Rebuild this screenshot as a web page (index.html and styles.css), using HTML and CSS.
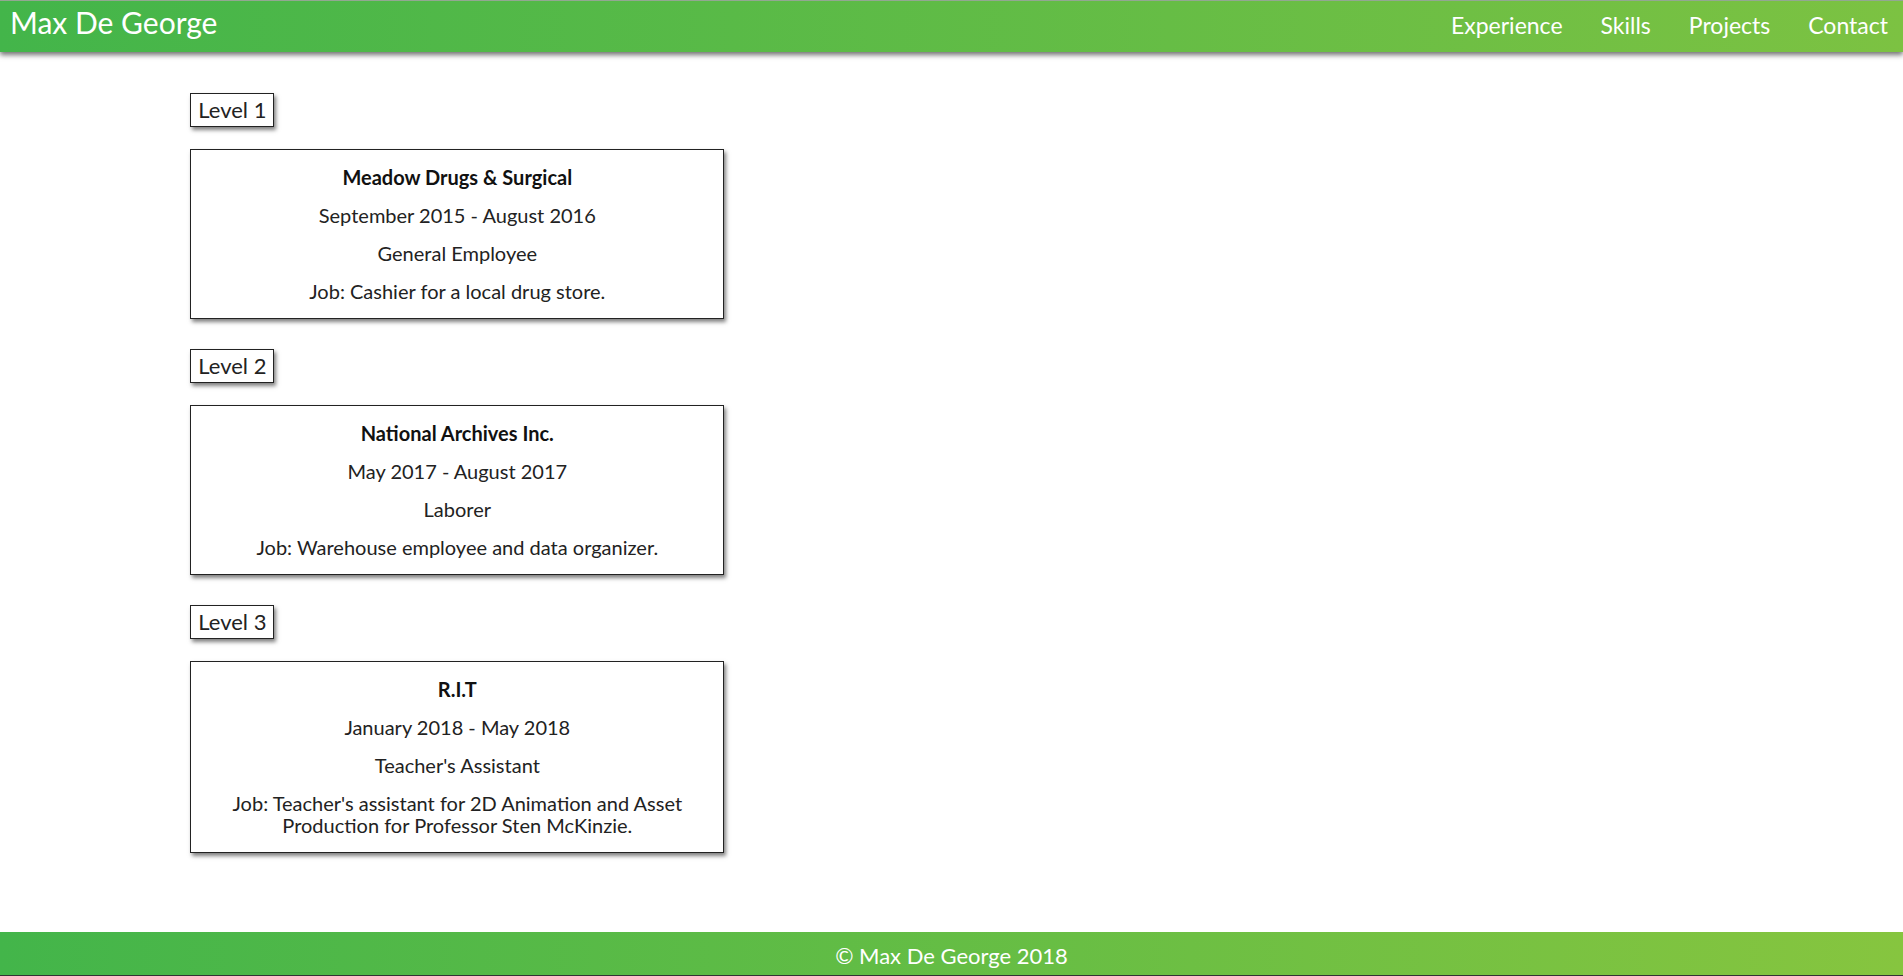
FILE: index.html
```html
<!DOCTYPE html>
<html lang="en">
<head>
<meta charset="utf-8">
<title>Max De George - Experience</title>
<link rel="stylesheet" href="styles.css">
</head>
<body>
<header class="topbar">
  <div class="brand">Max De George</div>
  <nav class="nav">
    <a class="nav-link" href="#">Experience</a>
    <a class="nav-link" href="#">Skills</a>
    <a class="nav-link" href="#">Projects</a>
    <a class="nav-link" href="#">Contact</a>
  </nav>
</header>
<main class="content">
  <section class="level">
    <h2 class="level-tag">Level 1</h2>
    <div class="job-card">
      <p class="job-company">Meadow Drugs &amp; Surgical</p>
      <p>September 2015 - August 2016</p>
      <p>General Employee</p>
      <p>Job: Cashier for a local drug store.</p>
    </div>
  </section>
  <section class="level">
    <h2 class="level-tag">Level 2</h2>
    <div class="job-card">
      <p class="job-company">National Archives Inc.</p>
      <p>May 2017 - August 2017</p>
      <p>Laborer</p>
      <p>Job: Warehouse employee and data organizer.</p>
    </div>
  </section>
  <section class="level">
    <h2 class="level-tag">Level 3</h2>
    <div class="job-card">
      <p class="job-company">R.I.T</p>
      <p>January 2018 - May 2018</p>
      <p>Teacher's Assistant</p>
      <p>Job: Teacher's assistant for 2D Animation and Asset Production for Professor Sten McKinzie.</p>
    </div>
  </section>
</main>
<footer class="footer">© Max De George 2018</footer>
</body>
</html>
```
FILE: styles.css
```css
html, body {
  margin: 0;
  padding: 0;
}
body {
  font-family: Lato, "Liberation Sans", sans-serif;
  color: #222;
  background: #fff;
  min-height: 976px;
  display: flex;
  flex-direction: column;
}
.topbar {
  height: 52px;
  box-sizing: border-box;
  border-top: 1px solid #93a792;
  background: linear-gradient(to right, #43b54a, #7cc242);
  box-shadow: 0 3px 5px rgba(0, 0, 0, 0.55);
  display: flex;
  justify-content: space-between;
  align-items: flex-start;
  color: #fff;
  position: relative;
  z-index: 1;
}
.brand {
  font-size: 30px;
  line-height: 40px;
  padding-left: 10px;
  margin-top: 1px;
}
.nav {
  display: flex;
  gap: 38px;
  padding-right: 15px;
  margin-top: 7px;
}
.nav-link {
  color: #fff;
  text-decoration: none;
  font-size: 23px;
  line-height: 34px;
}
.content {
  flex: 1;
  padding: 41px 0 0 10%;
}
.level {
  margin-bottom: 30px;
}
.level-tag {
  display: inline-block;
  vertical-align: top;
  margin: 0 0 22px;
  font-weight: normal;
  font-size: 22px;
  line-height: 32px;
  padding: 0 7px;
  border: 1px solid #222;
  box-shadow: 2px 3px 4px rgba(0, 0, 0, 0.5);
}
.job-card {
  width: 28%;
  min-width: 534px;
  box-sizing: border-box;
  border: 1px solid #222;
  box-shadow: 2px 3px 4px rgba(0, 0, 0, 0.5);
  text-align: center;
  padding: 0 30px;
}
.job-card p {
  margin: 16px 0;
  font-size: 20px;
  line-height: 22px;
}
.job-card .job-company {
  font-weight: bold;
  color: #111;
}
.footer {
  height: 44px;
  box-sizing: border-box;
  border-bottom: 1px solid #333;
  background: linear-gradient(to right, #43b54a, #86c53f);
  color: #fff;
  font-size: 22px;
  line-height: 26px;
  padding-top: 11px;
  text-align: center;
}
```
